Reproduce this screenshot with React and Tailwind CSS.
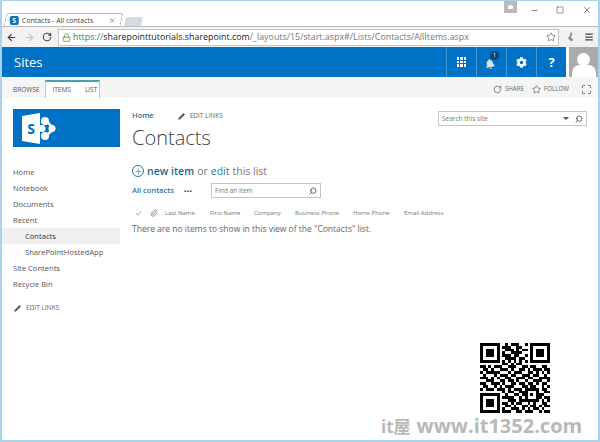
import React from "react";
import { ArrowLeft, ArrowRight, RotateCw, Lock, Star, Menu, X, Minus, Square, Search, Pencil, Check, Paperclip, Plus, Maximize } from "lucide-react";
import { FaBell, FaCog } from "react-icons/fa";

const QR = [
  "1111111001011100101111111",
  "1000001011100110001000001",
  "1011101001110101101011101",
  "1011101010011110001011101",
  "1011101011101100101011101",
  "1000001001111011001000001",
  "1111111010101010101111111",
  "0000000011010110000000000",
  "1101011100111001101100110",
  "0110100111010011010111011",
  "1011111000101110011010101",
  "0100010111011001110110010",
  "1110101001100111011001111",
  "0011100110110100100111001",
  "1100111010011011011010110",
  "0110010101110001101100101",
  "1011101110101110111110110",
  "0000000010110011100010011",
  "1111111001001101101011100",
  "1000001011110010100011011",
  "1011101000111011111110101",
  "1011101011010110010100110",
  "1011101001101001101101011",
  "1000001010011101010110100",
  "1111111011100110111001011",
];

const navItems = [
  { label: "Home" },
  { label: "Notebook" },
  { label: "Documents" },
  { label: "Recent" },
  { label: "Contacts", sub: true, active: true },
  { label: "SharePointHostedApp", sub: true },
  { label: "Site Contents" },
  { label: "Recycle Bin" },
];

const columns = [
  ["Last Name", "w-[45px]"],
  ["First Name", "w-[44px]"],
  ["Company", "w-[41px]"],
  ["Business Phone", "w-[58px]"],
  ["Home Phone", "w-[51px]"],
  ["Email Address", "w-[50px]"],
];

const SpLogo = ({ className }) => (
  <svg viewBox="0 0 34 31" className={className}>
    <path d="M19 8 L24 8 L32 15.5 L24 23 L19 23" fill="none" stroke="#fff" strokeWidth="2.5" />
    <circle cx="23" cy="8" r="4" fill="#fff" />
    <circle cx="23" cy="23" r="4" fill="#fff" />
    <circle cx="30" cy="15.5" r="3.5" fill="#fff" />
    <circle cx="20" cy="15.5" r="3.5" fill="#fff" />
    <path d="M0 3 L18 0 V31 L0 28 Z" fill="#fff" />
    <text x="9" y="21" textAnchor="middle" fontSize="14" fontWeight="700" fill="#0072c6" fontFamily="Open Sans, sans-serif">S</text>
  </svg>
);

const App = () => {
  return (
    <div className="relative w-[600px] h-[442px] overflow-hidden bg-white border-x-2 border-t border-b-2 border-[#a8d3ea] font-['Open_Sans',sans-serif] text-[#555]">
      {/* browser title bar */}
      <div className="h-[25px] flex items-end pl-[3px]">
        <div className="w-[117px] h-[13px] bg-white border border-b-0 border-[#bbb] rounded-t-[3px] skew-x-[-12deg] flex items-center">
          <div className="skew-x-[12deg] flex items-center pl-[4px] w-full">
            <div className="w-[9px] h-[9px] rounded-[2px] bg-[#0b72b8] text-white text-[7px] leading-[9px] text-center font-bold">S</div>
            <span className="ml-[3px] text-[7px] leading-none text-[#444] whitespace-nowrap">Contacts - All contacts</span>
            <X size={7} strokeWidth={2} className="ml-auto mr-[5px] text-[#444]" />
          </div>
        </div>
        <div className="ml-[3px] w-[17px] h-[9px] bg-[#d5dae2] rounded-t-[2px] skew-x-[-12deg]" />
        <div className="ml-auto h-full flex items-start pr-[4px]">
          <div className="w-[13px] h-[12px] bg-[#b9b9b9] flex items-center justify-center mr-[13px]">
            <div className="w-[5px] h-[4px] rounded-t-[2px] bg-white" />
          </div>
          <Minus size={9} strokeWidth={1.5} className="mt-[5px] text-[#333] mr-[17px]" />
          <Square size={8} strokeWidth={1.5} className="mt-[5px] text-[#333] mr-[18px]" />
          <X size={10} strokeWidth={1.5} className="mt-[4px] text-[#333] mr-[2px]" />
        </div>
      </div>

      {/* browser toolbar */}
      <div className="h-[21px] flex items-center bg-[#f2f2f2] border-t border-[#bbb]">
        <ArrowLeft size={11} strokeWidth={2.5} className="ml-[4px] text-[#444]" />
        <ArrowRight size={11} strokeWidth={2.5} className="ml-[7px] text-[#c4c4c4]" />
        <RotateCw size={10} strokeWidth={2.5} className="ml-[7px] text-[#444]" />
        <div className="ml-[6px] w-[501px] h-[17px] bg-white border border-[#c4c4c4] flex items-center pl-[3px]">
          <Lock size={9} strokeWidth={2.5} className="text-[#6aa84f]" />
          <span className="ml-[2px] text-[8.9px] leading-none whitespace-nowrap text-[#777]">
            <span className="text-[#2f8a3c]">https://</span>
            <span className="text-[#222]">sharepointtutorials.sharepoint.com</span>
            /_layouts/15/start.aspx#/Lists/Contacts/AllItems.aspx
          </span>
          <Star size={10} className="ml-auto mr-[2px] text-[#777]" />
        </div>
        <svg viewBox="0 0 10 12" className="ml-[7px] w-[8px] h-[10px]">
          <path d="M6 0 L8 1 L6 7 L9 9 L7 12 L2 7 L4 6 Z" fill="#8a8a8a" />
        </svg>
        <Menu size={10} strokeWidth={3} className="ml-[10px] text-[#444]" />
      </div>

      {/* suite bar */}
      <div className="h-[30px] flex">
        <div className="w-[564px] bg-[#0072c6] flex items-center">
          <span className="ml-[12px] text-[13px] leading-none text-white">Sites</span>
          <div className="ml-auto flex h-full">
            <div className="w-[30px] border-l border-[#3f96d4] flex items-center justify-center">
              <div className="grid grid-cols-3 gap-[1px]">
                {[0, 1, 2, 3, 4, 5, 6, 7, 8].map((i) => (
                  <div key={i} className="w-[2.5px] h-[2.5px] bg-white" />
                ))}
              </div>
            </div>
            <div className="relative w-[30px] border-l border-[#3f96d4] flex items-center justify-center">
              <FaBell size={10} className="text-[#cfe5f5] mt-[3px] -ml-[3px] -rotate-[12deg]" />
              <div className="absolute left-[13px] top-[4px] w-[9px] h-[9px] rounded-full bg-[#10407a] text-white text-[6px] leading-[9px] text-center">1</div>
            </div>
            <div className="w-[30px] border-l border-[#3f96d4] flex items-center justify-center">
              <FaCog size={11} className="text-white" />
            </div>
            <div className="w-[30px] border-l border-[#3f96d4] flex items-center justify-center text-white text-[13px] font-bold leading-none">?</div>
          </div>
        </div>
        <div className="ml-[3px] w-[29px] bg-[#ababab] overflow-hidden flex flex-col items-center">
          <div className="mt-[6px] w-[13px] h-[14px] rounded-full bg-white" />
          <div className="mt-[-1px] w-[24px] h-[14px] rounded-t-[8px] bg-white" />
        </div>
      </div>

      {/* ribbon */}
      <div className="h-[21px] bg-[#f5f5f5] flex items-end text-[6.5px] leading-none text-[#555]">
        <span className="ml-[11px] mb-[5px]">BROWSE</span>
        <div className="ml-[6px] h-[18px] w-[55px] bg-white border-x border-[#a5cbd6] border-t-2 border-t-[#48a0b4] flex items-center">
          <span className="ml-[6px]">ITEMS</span>
          <span className="ml-[14px]">LIST</span>
        </div>
        <div className="ml-auto mb-[3px] flex items-center text-[6.2px] text-[#666]">
          <RotateCw size={9} className="mr-[3px]" />
          <span>SHARE</span>
          <Star size={9} className="ml-[8px] mr-[3px]" />
          <span>FOLLOW</span>
          <Maximize size={11} className="ml-[12px] mr-[6px]" />
        </div>
      </div>

      <div className="flex">
        {/* left nav */}
        <div className="w-[118px] shrink-0">
          <div className="ml-[11px] mt-[11px] w-[107px] h-[38px] bg-[#0072c6] flex items-center">
            <SpLogo className="ml-[9px] w-[34px] h-[31px]" />
          </div>
          <div className="mt-[17px] text-[7.6px] leading-[16px] text-[#555]">
            {navItems.map((item) => (
              <div
                key={item.label}
                className={`h-[16px] whitespace-nowrap ${item.sub ? "pl-[23px]" : "pl-[11px]"} ${item.active ? "bg-[#f0f0f0] text-[#333]" : ""}`}
              >
                {item.label}
              </div>
            ))}
          </div>
          <div className="mt-[13px] ml-[12px] flex items-center text-[6.5px] leading-none text-[#666]">
            <Pencil size={7} fill="#555" className="mr-[5px]" />
            EDIT LINKS
          </div>
        </div>

        {/* main content */}
        <div className="flex-1 pl-[12px]">
          <div className="mt-[13px] flex items-start">
            <div className="w-[306px]">
              <div className="flex items-center h-[10px] leading-none">
                <span className="text-[7.5px] font-semibold text-[#2a6f97]">Home</span>
                <Pencil size={7} fill="#555" className="ml-[24px] text-[#555]" />
                <span className="ml-[5px] text-[6.5px] text-[#666]">EDIT LINKS</span>
              </div>
              <div className="mt-[3px] text-[20px] leading-[28px] font-light text-[#444]">Contacts</div>
            </div>
            <div className="w-[149px] h-[15px] border border-[#c6c6c6] flex items-center text-[6.5px] text-[#777]">
              <span className="ml-[3px]">Search this site</span>
              <div className="ml-auto mr-[6px] w-0 h-0 border-x-[3px] border-x-transparent border-t-[3px] border-t-[#555]" />
              <Search size={8} strokeWidth={2.5} className="mr-[3px] text-[#444] -scale-x-100" />
            </div>
          </div>

          <div className="mt-[12px] flex items-center h-[14px] text-[10.5px] leading-none whitespace-nowrap">
            <div className="w-[12px] h-[12px] rounded-full border border-[#2a6f97] flex items-center justify-center">
              <Plus size={9} strokeWidth={1.5} className="text-[#2a6f97]" />
            </div>
            <span className="ml-[3px] font-semibold text-[#1d6a94]">new item</span>
            <span className="ml-[3px] text-[#777]">or</span>
            <span className="ml-[3px] text-[#2a78a5]">edit</span>
            <span className="ml-[3px] text-[#777]">this list</span>
          </div>

          <div className="mt-[5px] flex items-center h-[15px]">
            <span className="text-[7.5px] font-semibold text-[#2a78a5] w-[52px] whitespace-nowrap">All contacts</span>
            <span className="text-[6px] font-bold leading-none text-[#444] tracking-[0.5px] w-[27px]">•••</span>
            <div className="w-[110px] h-[15px] border border-[#c6c6c6] flex items-center justify-between text-[6.5px] text-[#777]">
              <span className="ml-[3px]">Find an item</span>
              <Search size={8} strokeWidth={2.5} className="mr-[3px] text-[#444] -scale-x-100" />
            </div>
          </div>

          <div className="mt-[8px] flex items-center h-[14px] text-[6px] leading-none text-[#777] whitespace-nowrap">
            <Check size={7} strokeWidth={2} className="ml-[3px] text-[#555]" />
            <Paperclip size={8} className="ml-[8px] text-[#777]" />
            <span className="w-[7px]" />
            {columns.map(([label, width]) => (
              <span key={label} className={width}>{label}</span>
            ))}
          </div>

          <div className="mt-[3px] text-[8.5px] leading-[12px] text-[#666] whitespace-nowrap">
            There are no items to show in this view of the "Contacts" list.
          </div>
        </div>
      </div>

      {/* watermark */}
      <svg viewBox="0 0 25 25" shapeRendering="crispEdges" className="absolute left-[478px] top-[342px] w-[70px] h-[70px]">
        {QR.flatMap((row, y) =>
          row.split("").map((c, x) => (c === "1" ? <rect key={`${x}-${y}`} x={x} y={y} width="1" height="1" fill="#000" /> : null))
        )}
      </svg>
      <div className="absolute left-[379px] top-[413px] h-[24px] flex items-center font-bold text-[#b8b8b8] whitespace-nowrap font-['Open_Sans','Noto_Sans_CJK_SC',sans-serif]">
        <span className="text-[17px] leading-none">it屋</span>
        <span className="ml-[6px] text-[20px] leading-none">www.it1352.com</span>
      </div>
    </div>
  );
};

export default App;
